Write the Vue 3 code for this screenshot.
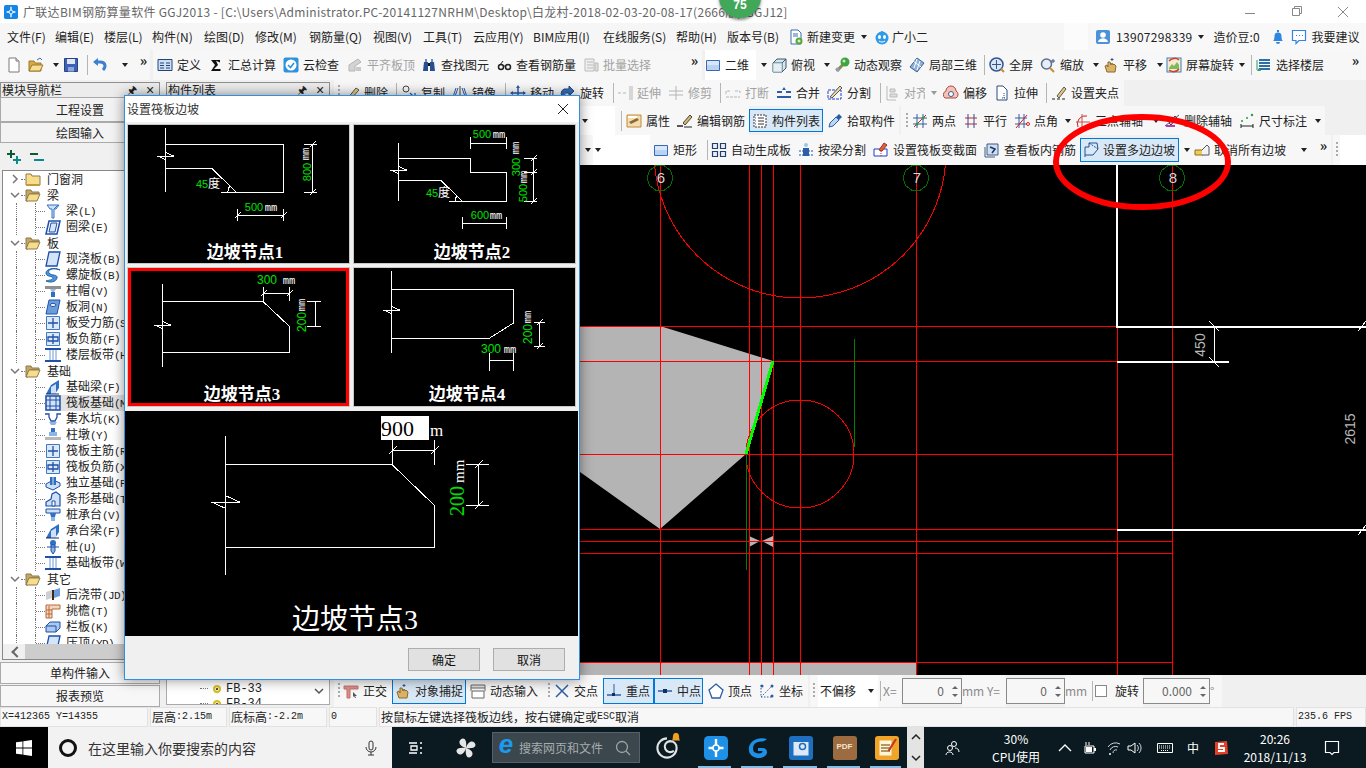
<script setup>
// x positions are read off the toolbar; widths come from the gap to the next item
const flow = (end, list) =>
  list.map((it, n) => ({ ...it, w: (n + 1 < list.length ? list[n + 1].x : end) - it.x }))

const sep = (x) => ({ x, k: 'sep' })
const arrow = (x) => ({ x, k: 'arrow' })
const more = (x) => ({ x, k: 'more' })
const grip = (x) => ({ x, k: 'grip' })
const brk = (x) => ({ x, k: 'brk' })
const blank = (x) => ({ x })
const btn = (x, i, t, extra = {}) => ({ x, i, t, ...extra })
const dis = { dis: true }
const on = { on: true }

const rows = [
  {
    name: 'r1',
    items: flow(1366, [
      blank(0), btn(6, 'doc'), btn(28, 'folder'), arrow(48), btn(63, 'save'), sep(83), btn(92, 'undo'), arrow(112),
      more(137), brk(150), blank(153), btn(157, 'def', '定义'), btn(208, 'sigma', '汇总计算'), btn(283, 'cloud', '云检查'),
      btn(347, 'level', '平齐板顶', dis), btn(421, 'binoc', '查找图元'), btn(496, 'glass', '查看钢筋量'),
      btn(583, 'batch', '批量选择', dis), more(687), brk(702), { x: 705, i: 'rect', t: '二维', k: 'white' },
      arrow(756), btn(771, 'box', '俯视'), arrow(820), btn(834, 'orbit', '动态观察'), btn(909, 'local', '局部三维'),
      sep(980), btn(989, 'full', '全屏'), btn(1040, 'zoom', '缩放'), arrow(1089), btn(1103, 'hand', '平移'), arrow(1153),
      btn(1166, 'screen', '屏幕旋转'), arrow(1236), sep(1247), btn(1256, 'floors', '选择楼层'), more(1349), blank(1362),
    ]),
  },
  {
    name: 'r2',
    items: flow(1366, [
      brk(330), grip(334), btn(344, 'del', '删除'), sep(392), btn(401, 'copy', '复制'), btn(452, 'mirror', '镜像'), sep(500),
      btn(510, 'move', '移动'), btn(560, 'turn', '旋转'), sep(609), btn(617, 'extend', '延伸', dis), btn(668, 'trim', '修剪', dis),
      sep(716), btn(725, 'cut', '打断', dis), btn(776, 'merge', '合并'), btn(827, 'split', '分割'), sep(876),
      btn(885, 'align', '对齐', { ...dis, wide: true }), { x: 925, k: 'arrow', dis: true }, btn(943, 'offset', '偏移'),
      btn(994, 'stretch', '拉伸'), sep(1042), btn(1051, 'gripset', '设置夹点'), brk(1124),
    ]),
  },
  {
    name: 'r3',
    items: flow(1366, [
      brk(330), { x: 580, k: 'combo' }, blank(615), sep(617), btn(626, 'prop', '属性'), btn(677, 'edit', '编辑钢筋'),
      btn(749, 'list', '构件列表', on), blank(823), btn(827, 'pick', '拾取构件'), brk(899), grip(901), btn(912, 'two', '两点'),
      btn(963, 'para', '平行'), btn(1014, 'angle', '点角'), arrow(1060), btn(1075, 'three', '三点辅轴'), arrow(1148),
      btn(1164, 'delaxis', '删除辅轴'), btn(1239, 'dim', '尺寸标注'), arrow(1311), brk(1325),
    ]),
  },
  {
    name: 'r4',
    items: flow(1366, [
      brk(330), blank(580), arrow(582), { x: 593, k: 'combo' }, blank(650), btn(653, 'rect', '矩形'), sep(703),
      btn(711, 'auto', '自动生成板'), btn(798, 'beam', '按梁分割'), btn(873, 'section', '设置筏板变截面'),
      btn(984, 'viewbar', '查看板内钢筋'), btn(1080, 'poly', '设置多边边坡', on), arrow(1179), btn(1194, 'cancel', '取消所有边坡'),
      arrow(1291), more(1316), brk(1331), grip(1333), { x: 1340, k: 'white' },
    ]),
  },
  {
    name: 'r5',
    items: flow(1366, [
      brk(330), grip(334), btn(343, 'ortho', '正交'), btn(392, 'hand', '对象捕捉', on), blank(466), btn(470, 'dyn', '动态输入'),
      grip(544), btn(554, 'cross', '交点'), btn(603, 'perp', '重点', on), btn(654, 'mid', '中点', on), blank(703),
      btn(708, 'vertex', '顶点'), btn(759, 'coord', '坐标'), brk(808), grip(810), { x: 818, k: 'combo', t: '不偏移' }, sep(878),
      { x: 883, k: 'lab', t: 'X=' }, { x: 902, k: 'input', t: '0' }, { x: 962, k: 'lab', t: 'mm' },
      { x: 987, k: 'lab', t: 'Y=' }, { x: 1006, k: 'input', t: '0' }, { x: 1065, k: 'lab', t: 'mm' }, sep(1089),
      { x: 1095, k: 'check' }, { x: 1115, k: 'plain', t: '旋转' }, { x: 1143, k: 'input', t: '0.000' }, { x: 1210, k: 'lab', t: '°' },
      brk(1222),
    ]),
  },
]

const menu = flow(788, [
  { x: 7, t: '文件(F)' }, { x: 55, t: '编辑(E)' }, { x: 104, t: '楼层(L)' }, { x: 152, t: '构件(N)' }, { x: 204, t: '绘图(D)' },
  { x: 255, t: '修改(M)' }, { x: 309, t: '钢筋量(Q)' }, { x: 373, t: '视图(V)' }, { x: 423, t: '工具(T)' }, { x: 473, t: '云应用(Y)' },
  { x: 533, t: 'BIM应用(I)' }, { x: 603, t: '在线服务(S)' }, { x: 676, t: '帮助(H)' }, { x: 727, t: '版本号(B)' },
])

const tree = [
  { t: '门窗洞', closed: true },
  { t: '梁' },
  { i: 'tbeam', t: '梁', c: '(L)' },
  { i: 'tring', t: '圈梁', c: '(E)' },
  { t: '板' },
  { i: 'tslab', t: '现浇板', c: '(B)' },
  { i: 'tspiral', t: '螺旋板', c: '(B)' },
  { i: 'tcap', t: '柱帽', c: '(V)' },
  { i: 'thole', t: '板洞', c: '(N)' },
  { i: 'tforce', t: '板受力筋', c: '(S)' },
  { i: 'tneg', t: '板负筋', c: '(F)' },
  { i: 'tband', t: '楼层板带', c: '(H)' },
  { t: '基础' },
  { i: 'tfbeam', t: '基础梁', c: '(F)' },
  { i: 'traft', t: '筏板基础', c: '(M)', sel: true },
  { i: 'tpit', t: '集水坑', c: '(K)' },
  { i: 'tpier', t: '柱墩', c: '(Y)' },
  { i: 'tforce', t: '筏板主筋', c: '(R)' },
  { i: 'tneg', t: '筏板负筋', c: '(X)' },
  { i: 'tiso', t: '独立基础', c: '(P)' },
  { i: 'tstrip', t: '条形基础', c: '(T)' },
  { i: 'tpcap', t: '桩承台', c: '(V)' },
  { i: 'tfbeam', t: '承台梁', c: '(F)' },
  { i: 'tpile', t: '桩', c: '(U)' },
  { i: 'tband', t: '基础板带', c: '(W)' },
  { t: '其它' },
  { i: 'tpour', t: '后浇带', c: '(JD)' },
  { i: 'teave', t: '挑檐', c: '(T)' },
  { i: 'trail', t: '栏板', c: '(K)' },
  { i: 'tslab', t: '压顶', c: '(YD)' },
]

const zig = (x, y, s) => `M${x - s} ${y}H${x + s}L${x} ${y - s * 0.45}M${x - s} ${y}L${x} ${y + s * 0.45}`
const tick = (x, y, s = 3) => `M${x - s} ${y + s}L${x + s} ${y - s}`

const tiles = [
  {
    left: true,
    d: 'M37.5 3V67M37.5 19.5H155.5V67.5H93M37.5 43.5H84L108 67M100 67A8 8 0 0 1 102 61M184.5 19V67M176 19.5H189M176 67.5H189M109.5 90.5H155M109.5 84V96M155.5 84V96' +
      zig(37.5, 31, 8) + tick(184.5, 19.5) + tick(184.5, 67.5) + tick(109.5, 90.5) + tick(155.5, 90.5),
    nums: [{ x: 126, y: 86, t: '500' }, { x: 74, y: 63, t: '45' }, { x: 183, y: 47, t: '800', rot: true }],
    units: [{ x: 143, y: 86, t: 'mm' }, { x: 181, y: 29, t: 'mm', rot: true }],
    cn: [{ x: 86, y: 63, t: '度' }],
    title: '边坡节点1', tx: 117, ty: 133,
  },
  {
    d: 'M44.5 18V76M44.5 33.5H116.5V47.5H152.5V76.5H95M44.5 55.5H87L108 76M101 76A7 7 0 0 1 103 71M116.5 18.5H152M116.5 12V24M152.5 12V24M179.5 33V76M170 33.5H183M170 47.5H183M170 76.5H183M108.5 98.5H152M108.5 92V104M152.5 92V104' +
      zig(44.5, 45, 8) + tick(179.5, 33.5) + tick(179.5, 47.5) + tick(179.5, 76.5),
    nums: [{ x: 128, y: 13, t: '500' }, { x: 126, y: 94, t: '600' }, { x: 78, y: 72, t: '45' }, { x: 166, y: 42, t: '300', rot: true }, { x: 173, y: 68, t: '500', rot: true }],
    units: [{ x: 145, y: 13, t: 'mm' }, { x: 142, y: 94, t: 'mm' }, { x: 165, y: 23, t: 'mm', rot: true }, { x: 173, y: 52, t: 'mm', rot: true }],
    cn: [{ x: 90, y: 72, t: '度' }],
    title: '边坡节点2', tx: 118, ty: 133,
  },
  {
    sel: true,
    d: 'M34.5 16V99M34.5 33.5H135L161 58V84.5H34.5M135.5 19V33M161.5 19V33M135.5 25.5H161M187.5 33V58M179 33.5H193M179 58.5H193' +
      zig(34.5, 57, 8) + tick(135.5, 25.5) + tick(161.5, 25.5),
    nums: [{ x: 139, y: 16, t: '300', big: true }, { x: 178, y: 54, t: '200', rot: true, big: true }],
    units: [{ x: 161, y: 16, t: 'mm' }, { x: 177, y: 37, t: 'mm', rot: true }],
    cn: [],
    title: '边坡节点3', tx: 114, ty: 132,
  },
  {
    d: 'M37.5 3V85M37.5 21.5H159.5V55L135 70.5H37.5M185.5 54V78M180 54.5H191M180 78.5H191M135.5 85V103M159.5 85V103M135.5 92.5H159' +
      zig(37.5, 42, 8) + tick(185.5, 54.5) + tick(185.5, 78.5),
    nums: [{ x: 137, y: 85, t: '300', big: true }, { x: 178, y: 66, t: '200', rot: true, big: true }],
    units: [{ x: 156, y: 85, t: 'mm' }, { x: 177, y: 49, t: 'mm', rot: true }],
    cn: [],
    title: '边坡节点4', tx: 113, ty: 132,
  },
]
const bigShape = 'M100.5 25V164M100.5 53.5H267L309 94V136.5H100.5M267.5 29V54M309.5 29V54M267.5 39.5H309M353.5 53V94M341 53.5H364M341 94.5H364' +
  zig(100.5, 91, 14) + tick(267.5, 39.5, 4) + tick(309.5, 39.5, 4) + tick(353.5, 53.5, 4) + tick(353.5, 94.5, 4)

const vLines = [660, 749, 761, 773, 800, 916, 1172]
const hLines = [[326, 1117], [361, 1117], [454, 1172], [529, 1117], [541, 1172], [553, 1172], [662, 1172]]
const axes = [{ x: 660, t: '6' }, { x: 916, t: '7' }, { x: 1172, t: '8' }]
const octagon = (x) =>
  Array.from({ length: 10 }, (_, n) => {
    const a = (n * Math.PI) / 5
    return `${(x + 13 * Math.cos(a)).toFixed(1)},${(178 + 13 * Math.sin(a)).toFixed(1)}`
  }).join(' ')

const taskApps = [
  { w: 43, i: 'appPlus' }, { w: 42, i: 'appG' }, { w: 44, i: 'appBook' }, { w: 43, i: 'appPdf' }, { w: 41, i: 'appNote' },
]
const tray = [
  { w: 58, i: 'people' }, { w: 68, cpu: true }, { w: 4 }, { w: 22, i: 'up' }, { w: 28, i: 'batt' }, { w: 20, i: 'wifi' },
  { w: 22, i: 'speak' }, { w: 38, i: 'keys' }, { w: 18, zh: true }, { w: 38, i: 'sogou' }, { w: 70, clock: true }, { w: 44, i: 'note' },
]

const icons = {
  doc: '<path d="M3 1h7l3 3v11H3z" fill="#fff" stroke="#7a7a7a"/><path d="M10 1v3h3" fill="#ddd" stroke="#7a7a7a"/>',
  folder: '<path d="M1 4h5l1 2h6v8H1z" fill="#d9a93e" stroke="#9b7a2c"/><path d="M4 8h11l-3 6H1z" fill="#f6df95" stroke="#9b7a2c"/><path d="M9 3l3-2 2 2" fill="none" stroke="#3a6bb0"/>',
  save: '<path d="M1.500 1.500h13v13h-13z" fill="#3f61b4" stroke="#2a4288"/><path d="M4 2h8v5H4z" fill="#dfe6f5"/><path d="M5 10h6v4.500H5z" fill="#8fa6d8"/>',
  undo: '<path d="M11 13c3-3 3-8-3-8H3" fill="none" stroke="#3f7fcf" stroke-width="3"/><path d="M6 1L1 5l5 4z" fill="#3f7fcf"/>',
  def: '<path d="M1 2.500h14v11H1z" fill="#cfdff3" stroke="#22447c"/><path d="M3 6h4M3 8.500h4M3 11h4M9 6h4M9 8.500h4M9 11h4" stroke="#22447c"/>',
  sigma: '<path d="M3 3h9v2.500L8 3.800 10 8 6 12h6.500V14H3l4-6z" fill="#111"/>',
  cloud: '<rect x=".5" y=".5" width="15" height="15" rx="2" fill="#2e93dc"/><circle cx="8" cy="8" r="5.500" fill="#fff"/><path d="M5 8l2.500 2.500L11 6" fill="none" stroke="#2e93dc" stroke-width="1.600"/>',
  level: '<path d="M2 14V8l9-6 3 3-6 4v5z" fill="#d3d3d3" stroke="#b5b5b5"/><path d="M9 14h5v-4H9z" fill="#c9c9c9"/>',
  binoc: '<path d="M2 14l1-9h4v9zM9 14V5h4l1 9z" fill="#27508f"/><path d="M4 2h2v3H4zM10 2h2v3h-2z" fill="#6b8ec2"/><path d="M7 6h2v3H7z" fill="#111"/>',
  glass: '<circle cx="5" cy="10" r="2.500" fill="none" stroke="#222" stroke-width="1.500"/><circle cx="12" cy="10" r="2.500" fill="none" stroke="#222" stroke-width="1.500"/><path d="M7 9h3M4 8l3-4" stroke="#222"/>',
  batch: '<path d="M2 2h9v12H2z" fill="#eee" stroke="#bbb"/><path d="M4 5h6M4 8h6M4 11h6M12 6h3v8h-3z" stroke="#bbb" fill="#ddd"/>',
  rect: '<path d="M1.500 3.500h13v10h-13z" fill="#b9d2f2" stroke="#3568b8"/><path d="M2 4h12v4H2z" fill="#d8e6f8"/>',
  box: '<path d="M2 6l4-4h9v9l-4 4H2z" fill="#d5e6ee" stroke="#38586f"/><path d="M2 6h9v9M11 6l4-4" fill="none" stroke="#38586f"/><path d="M2 6h9v9H2z" fill="#eef5f8" fill-opacity=".6"/>',
  orbit: '<path d="M3 14L13 3" stroke="#8b8b4a" stroke-width="3"/><circle cx="11" cy="5" r="4.500" fill="#3fa544"/><circle cx="3.500" cy="12.500" r="2" fill="#8f9db0"/><circle cx="10" cy="4" r="1.500" fill="#c9e8b0"/>',
  local: '<path d="M8 1l7 5-7 9-7-5z" fill="#8fb0d8" stroke="#3c6396"/><path d="M4 4l8 6M8 2l-3 9M11 4l-3 9" stroke="#fff"/>',
  full: '<circle cx="7.500" cy="7.500" r="6.500" fill="#dbe6f3" stroke="#35568f" stroke-width="1.500"/><path d="M7.500 3v9M3 7.500h9" stroke="#35568f"/><path d="M12 12l3 3" stroke="#c88d2c" stroke-width="2"/>',
  zoom: '<circle cx="6.500" cy="7" r="5" fill="#e7eef7" stroke="#5a6f8c" stroke-width="1.500"/><path d="M10 11l4 4" stroke="#c88d2c" stroke-width="2"/><path d="M13 2v4M11 4h4" stroke="#35568f"/>',
  hand: '<path d="M4 15L2 9l2-1 1 2V5l2 0 1 3 1-2 1 2 1-1 2 2-1 6z" fill="#d9b36a" stroke="#8a6a2c"/><path d="M9 1v3M7.500 2.500h3" stroke="#35568f"/>',
  screen: '<rect x="1" y="1" width="14" height="14" fill="#f3ead0" stroke="#3d7fb8"/><path d="M3 11l3-4 2 2 3-4 2 3v4H3z" fill="#7dba5f"/><path d="M13 3a7 7 0 0 0-10 1M3 13a7 7 0 0 0 10-1" fill="none" stroke="#d23c2c" stroke-width="1.500"/>',
  floors: '<path d="M3 3h11M3 6h11M3 9h11M3 12h11" stroke="#2e6fa8" stroke-width="2"/><path d="M1 3v10" stroke="#2a9a62"/><path d="M1 14l2-3 2 3z" fill="#2a9a62"/>',
  del: '<path d="M3 14L12 3l3 2-8 9z" fill="#e7c77a" stroke="#555"/><path d="M1 15h12" stroke="#555"/>',
  copy: '<circle cx="5" cy="4" r="3" fill="none" stroke="#444"/><path d="M9 13h5V8M14 13L9 8" fill="none" stroke="#2c5ea8" stroke-width="1.300"/>',
  mirror: '<path d="M8 1v14" stroke="#444"/><path d="M6 3L2 14M4 3L1 12M10 3l4 11M12 3l3 9" stroke="#2c5ea8"/>',
  move: '<path d="M8 1v14M1 8h14" stroke="#2c5ea8" stroke-width="1.500"/><path d="M8 0l2 3H6zM8 16l2-3H6zM0 8l3-2v4zM16 8l-3-2v4z" fill="#2c5ea8"/>',
  turn: '<path d="M4 13a5 5 0 0 1 0-9h5v-3l5 5-5 5V8H6" fill="#3a6db8" stroke="#24487c"/>',
  extend: '<path d="M13 1v14M1 8h3M6 8h3M15 1v14" stroke="#b5b5b5"/>',
  trim: '<path d="M8 1v14M1 6h14M1 10h14" stroke="#b5b5b5"/>',
  cut: '<path d="M1 12h14M1 9V6h5M10 6h5v3" fill="none" stroke="#b5b5b5" stroke-dasharray="3 1"/>',
  merge: '<path d="M1 12h14" stroke="#2c5ea8" stroke-width="2"/><path d="M1 7h5M10 7h5" stroke="#2c5ea8" stroke-width="2"/><path d="M8 2l2 3H6z" fill="#2c5ea8"/>',
  split: '<path d="M1 5h13v9H1z" fill="none" stroke="#1d3ed0" stroke-dasharray="3 1"/><path d="M3 12L13 1l2 2L5 13z" fill="#e8d9a8" stroke="#555"/>',
  align: '<path d="M2 1v14h9" stroke="#bbb" fill="none"/><path d="M5 4h5v3H5zM5 9h7v3H5z" fill="#ddd" stroke="#bbb"/>',
  offset: '<path d="M2 13a4 4 0 0 1 1-7 5 5 0 0 1 10 0 4 4 0 0 1 0 7z" fill="#f3c2b8" stroke="#b04a3c"/><circle cx="8" cy="9" r="2.500" fill="#fff" stroke="#3b5b8c"/>',
  stretch: '<path d="M3 1h6l4 4v10H3z" fill="#fff" stroke="#2c4d80"/><path d="M10 8v5M8 13h4" stroke="#2c4d80" stroke-dasharray="1 1"/>',
  gripset: '<path d="M6 11L13 2l2 2-7 9z" fill="#e8c77a" stroke="#555"/><path d="M1 14h3M6 14h3M11 14h3" stroke="#222"/>',
  prop: '<path d="M1 2h14v12H1z" fill="#f4dcae" stroke="#c48a3a"/><path d="M3 9l8-4 2 2-8 4z" fill="#8c6a30"/><path d="M2 3h9v2H2z" fill="#fff"/>',
  edit: '<path d="M0 13h6" stroke="#222" stroke-width="1.500"/><path d="M6 10l7-8 2 2-7 8z" fill="#d9b66a" stroke="#444"/><path d="M7 14h8" stroke="#222"/>',
  list: '<path d="M2 2h12v12H2z" fill="#fff" stroke="#333" stroke-dasharray="2 1"/><path d="M6 5h6M6 8h6M6 11h6" stroke="#333"/><path d="M3 5h1M3 8h1M3 11h1" stroke="#2c5ea8"/>',
  pick: '<path d="M2 14l1-4 6-6 3 3-6 6z" fill="#bcd7f3" stroke="#2c5ea8"/><path d="M9 4l3-3 3 3-3 3z" fill="#2c5ea8"/>',
  two: '<path d="M1 5h14M1 11h14M5 1v14M11 1v14" stroke="#3a5a9a"/><path d="M2 14L14 2" stroke="#d02020"/><circle cx="11" cy="5" r="1.500" fill="#2a9a40"/><circle cx="5" cy="11" r="1.500" fill="#2a9a40"/>',
  para: '<path d="M2 5h12M2 11h12" stroke="#d02020"/><path d="M5 1v14M11 1v14" stroke="#2c4d9a"/>',
  angle: '<path d="M1 5h12M1 11h12M5 1v14M10 1v14" stroke="#3a5a9a"/><path d="M2 15L13 2" stroke="#d02020"/><circle cx="14" cy="11" r="1.500" fill="none" stroke="#d02020"/>',
  three: '<path d="M3 14a8 8 0 0 1 9-11" fill="none" stroke="#d02020"/><path d="M1 9h14M7 1v14" stroke="#c05050"/>',
  delaxis: '<path d="M1 13L15 2" stroke="#3a5a9a"/><path d="M2 13h9" stroke="#b040b0" stroke-width="2"/><path d="M5 10l6-7 2 2-6 7z" fill="#e0c0e8" stroke="#444"/>',
  dim: '<path d="M2 11v4M14 11v4M2 13h12" stroke="#222"/><circle cx="3" cy="8" r="1" fill="#2a9a40"/><circle cx="8" cy="5" r="1" fill="#2a9a40"/><circle cx="13" cy="2" r="1.200" fill="#2a9a40"/>',
  auto: '<path d="M1.500 1.500h5v5h-5zM9.500 1.500h5v5h-5zM1.500 9.500h5v5h-5zM9.500 9.500h5v5h-5z" fill="#e8edf6" stroke="#253e6e" stroke-width="1.200"/>',
  beam: '<path d="M1 9h14M1 13h14" stroke="#1d4fb8" stroke-dasharray="2 1"/><path d="M5 6h6v8H5z" fill="#2c5ea8"/><circle cx="8" cy="3" r="2" fill="#9ec4ee"/>',
  section: '<path d="M1 7h13v7H1z" fill="#fff" stroke="#1d3ed0"/><path d="M8 7v7" stroke="#d02020" stroke-dasharray="1 1"/><path d="M6 8l5-7 3 2-5 6z" fill="#e0603c" stroke="#a03020"/>',
  viewbar: '<path d="M3 2h11v11H3z" fill="#cfdff0" stroke="#3c5a88"/><path d="M1 5v10h10" fill="none" stroke="#3c5a88"/><path d="M6 5l5 2-3 4" fill="none" stroke="#1d3468" stroke-width="1.500"/>',
  poly: '<path d="M2 15V5h4V1h8l1 6-5 6H2" fill="#d9e9f8" stroke="#26508c"/><path d="M6 1l9 6" stroke="#26508c" stroke-dasharray="2 1"/>',
  cancel: '<path d="M1 8h8v5H1z" fill="#eecd52" stroke="#8a7020"/><path d="M8 8l5-5 2 2v8H8" fill="#f3f3f3" stroke="#556"/>',
  ortho: '<path d="M1 3h14v3H7v9H4V6H1z" fill="#d98e88" stroke="#c07068"/><path d="M10 9l4 4-2 0 1 2-1 0-1-2-1 1z" fill="#556"/>',
  dyn: '<path d="M1 2h14v3H1z" fill="#ddd" stroke="#666"/><path d="M2 8h12v7H2z" fill="#fff" stroke="#666"/><path d="M1 5v3M15 5v3" stroke="#666"/>',
  cross: '<path d="M2 2l12 12M14 2L2 14" stroke="#2c5ea8" stroke-width="1.500"/>',
  perp: '<path d="M1 12h14" stroke="#2c5ea8" stroke-width="1.500"/><path d="M8 1v11" stroke="#2c5ea8"/><rect x="6" y="10" width="3" height="3" fill="#103060"/>',
  mid: '<path d="M1 8h14" stroke="#2c5ea8" stroke-width="1.500"/><rect x="6" y="6" width="4" height="4" fill="#103060"/>',
  vertex: '<path d="M8 1l7 6-3 8H4L1 7z" fill="#fff" stroke="#2c5ea8" stroke-width="1.300"/>',
  coord: '<path d="M2 14L14 2M2 2v12h12" fill="none" stroke="#2c5ea8" stroke-dasharray="1.500 1.500"/><circle cx="3" cy="3" r="1.500" fill="#2c5ea8"/><circle cx="13" cy="3" r="1.500" fill="#2c5ea8"/><circle cx="13" cy="13" r="1.500" fill="#2c5ea8"/>',
  change: '<path d="M3 1h7l3 3v11H3z" fill="#fff" stroke="#3a6fb5"/><path d="M5 5h5M5 7h5" stroke="#3a6fb5"/><circle cx="11" cy="12" r="3.500" fill="#58a83c"/><path d="M9.500 12h3M11 10.500v3" stroke="#fff"/>',
  assist: '<circle cx="8" cy="9" r="6.500" fill="#2f9be8"/><circle cx="8" cy="3.500" r="1.500" fill="#2f9be8"/><ellipse cx="5.500" cy="8" rx="1.500" ry="2" fill="#fff"/><ellipse cx="10.500" cy="8" rx="1.500" ry="2" fill="#fff"/><path d="M5 12a4 3 0 0 0 6 0" fill="none" stroke="#fff"/>',
  user: '<rect x="1" y="1" width="14" height="14" rx="2" fill="#4d91d8"/><circle cx="8" cy="6" r="2.800" fill="#fff"/><path d="M3 13c1-5 9-5 10 0z" fill="#fff"/>',
  bell: '<path d="M3 12c2-1 1-5 2-7 1-2 5-2 6 0 1 2 0 6 2 7z" fill="#2f86e0"/><path d="M6 13h4a2 2 0 0 1-4 0z" fill="#2f86e0"/><rect x="7" y="1" width="2" height="2" fill="#2f86e0"/>',
  suggest: '<path d="M1.500 1.500h13v10H8l-3 3v-3H1.500z" fill="#fff" stroke="#2f86e0" stroke-width="1.200"/><path d="M5 6.500h1M8 6.500h1M11 6.500h1" stroke="#2f86e0"/>',
  plus: '<path d="M5 1v8M1 5h8" stroke="#0b5a36" stroke-width="2"/><path d="M11 7v8M7 11h8" stroke="#0c8a8a" stroke-width="2"/>',
  minus: '<path d="M1 5h8" stroke="#0b5a36" stroke-width="2"/><path d="M5 11h10" stroke="#0c8a8a" stroke-width="2"/>',
  closedFolder: '<path d="M1 3h5l1 2h8v9H1z" fill="#f7dd8a" stroke="#8b7a50"/><path d="M1 14h14" stroke="#c09a3e" stroke-width="2"/>',
  openFolder: '<path d="M1 3h5l1 2h7v2H5l-2 7H1z" fill="#c4a75e" stroke="#8b7a50"/><path d="M4 7h11l-3 7H1z" fill="#f7dd8a" stroke="#8b7a50"/>',
  tbeam: '<path d="M2 2h12l-3 4H9v9H7V6H5z" fill="#cfe1f6" stroke="#3573c4"/><path d="M9 6l4-4" stroke="#3573c4"/>',
  tring: '<path d="M4 2h11l-3 13H1z" fill="#fff" stroke="#1f4fa8" stroke-width="1.500"/><path d="M6 4h6l-2 9H4z" fill="#d7e6f9" stroke="#1f4fa8"/>',
  tslab: '<path d="M4 1h11l-3 14H1z" fill="#d3e5fa" stroke="#1f4fa8" stroke-width="1.300"/>',
  tspiral: '<path d="M15 3C8 0 2 3 4 6s9 1 8 5-7 5-11 3c3-1 7-1 7-3S1 10 1 6 9 0 15 3z" fill="#4a93de" stroke="#1f5fa8"/>',
  tcap: '<path d="M0 3h16v3H0z" fill="#8f8f8f"/><path d="M5 6h6l-2 3H7z" fill="#9eb9dc"/><path d="M6 9h4v5H6z" fill="#2f6fc4"/>',
  thole: '<path d="M4 1h11l-3 14H1z" fill="#6b9ddc" stroke="#1f4fa8"/><ellipse cx="8" cy="6" rx="3" ry="1.500" fill="#fff" stroke="#1f4fa8"/>',
  tforce: '<path d="M1.500 1.500h13v13h-13z" fill="#dce9f8" stroke="#4279c4"/><path d="M8 3v10M3 8h10" stroke="#1f4fa8" stroke-width="1.300"/>',
  tneg: '<path d="M1.500 1.500h13v13h-13z" fill="#dce9f8" stroke="#4279c4"/><path d="M3 6h10v4H3zM8 3v10" fill="none" stroke="#1f4fa8" stroke-width="1.300"/>',
  tband: '<path d="M0 2h16M0 14h16" stroke="#1f4fa8" stroke-width="2"/><path d="M5 3v10M8 3v10M11 3v10" stroke="#6a9ad8"/>',
  tfbeam: '<path d="M1 15l5-9 8-5v8l-4 6z" fill="#2f6fc4"/><path d="M6 15V8l5-3v10z" fill="#cfe1f6"/><path d="M1 15h13" stroke="#103060"/>',
  traft: '<path d="M1 1h14v14H1z" fill="#d3e3f7" stroke="#1f4fa8" stroke-width="1.500"/><path d="M1 5h14M1 11h14M5 1v14M11 1v14" stroke="#1f4fa8"/>',
  tpit: '<path d="M0 3h4v3l2 4h4l2-4V3h4" fill="none" stroke="#1f4fa8" stroke-width="1.300"/><path d="M4 11h8l-2 3H6z" fill="#8db5e3"/>',
  tpier: '<path d="M6 1h4v4H6z" fill="#2f6fc4"/><path d="M4 5h8v4H4z" fill="#8db5e3"/><path d="M0 10h16v3H0z" fill="#b8b8b8"/>',
  tiso: '<path d="M1 9l7-4 7 3v3l-7 4-7-3z" fill="#cfe1f6" stroke="#1f4fa8"/><path d="M5 2h6v8H5z" fill="#2f6fc4"/><path d="M8 2v8" stroke="#cfe1f6"/>',
  tstrip: '<path d="M1 15V11l5-3 1-5 4-2 4 3v11z" fill="#cfe1f6" stroke="#1f4fa8" stroke-width="1.200"/><path d="M7 15v-5h3v5z" fill="#fff" stroke="#1f4fa8"/>',
  tpcap: '<path d="M1 2h14v4H1z" fill="#cfe1f6" stroke="#1f4fa8"/><path d="M5 6h6l-1 4H6z" fill="#2f6fc4"/><path d="M6 10h4v4H6z" fill="#8db5e3"/>',
  tpile: '<circle cx="8" cy="4" r="3" fill="#2f6fc4"/><path d="M6 6h4v6l-2 3-2-3z" fill="#8db5e3" stroke="#1f4fa8"/><path d="M2 8h12" stroke="#1f4fa8"/>',
  tpour: '<path d="M1 5l6-2v8l-6 2z" fill="#cfcfcf"/><path d="M9 3l6-2v8l-6 2z" fill="#6b9ddc"/><path d="M7 3h2v10H7z" fill="#3a2a20"/>',
  teave: '<path d="M1 2h14v4l-8 0v9H1z" fill="#f7d5bd" stroke="#b5683c"/><path d="M1 7h6M1 11h6M4 3v12" stroke="#b5683c"/>',
  trail: '<path d="M1 7l4-4h10v6l-4 4H1z" fill="#a9c9ee" stroke="#1f4fa8"/><path d="M1 7h10v6" fill="none" stroke="#1f4fa8"/>',
  appPlus: '<rect x="0" y="0" width="16" height="16" rx="3" fill="#1e90e6"/><path d="M8 2v12M3 8h10" stroke="#fff" stroke-width="1.600"/><circle cx="8" cy="8" r="2" fill="#1e90e6" stroke="#fff"/>',
  appG: '<path d="M14 2C6 0 1 5 2 10s8 6 11 3c2-2 1-5-2-5H8v2h3c0 2-3 2-5 1S4 5 8 4c2-.5 4 0 6-2z" fill="#1e90e6"/>',
  appBook: '<rect width="16" height="16" rx="2" fill="#1e6fc0"/><path d="M3 4h5v9H3zM8 4h5v9H8z" fill="#dfe9f5"/><circle cx="9" cy="7" r="2" fill="none" stroke="#1e6fc0"/>',
  appPdf: '<rect width="16" height="16" rx="2" fill="#9c6b3f"/>',
  appNote: '<rect width="16" height="16" rx="2" fill="#f0a528"/><path d="M3 3h8v10H3z" fill="#fff6da"/><path d="M4 6h6M4 8h6M4 10h6" stroke="#9a7a3a"/><path d="M9 10l5-8" stroke="#c0392b" stroke-width="1.500"/>',
  people: '<circle cx="9" cy="4" r="2.500" fill="none" stroke="#fff"/><circle cx="5" cy="8" r="2.500" fill="none" stroke="#fff"/><path d="M1 15c0-4 7-4 7 0M10 8c2 0 4 1 4 4" fill="none" stroke="#fff"/>',
  up: '<path d="M2 11l6-6 6 6" fill="none" stroke="#fff" stroke-width="1.300"/>',
  batt: '<path d="M3 6h9v7H3z" fill="none" stroke="#fff"/><path d="M12 8h2v3h-2z" fill="#fff"/><path d="M4 7h6v5H4z" fill="#fff"/><path d="M4 2v3M7 2v3" stroke="#fff"/>',
  wifi: '<path d="M2 7a9 9 0 0 1 12-3M4 10a6 6 0 0 1 8-3M7 13a3 3 0 0 1 4-3" fill="none" stroke="#cfd6da"/><circle cx="4" cy="14" r="1" fill="#fff"/>',
  speak: '<path d="M1 6h3l4-3v10l-4-3H1z" fill="none" stroke="#fff"/><path d="M10 5a4 4 0 0 1 0 6M12 3a7 7 0 0 1 0 10" fill="none" stroke="#cfd6da"/>',
  keys: '<path d="M.5 3.500h15v9H.5z" fill="none" stroke="#fff"/><path d="M2 6h12M2 8h12M4 10.500h8" stroke="#fff" stroke-dasharray="1 1"/>',
  sogou: '<path d="M2 2l12-1 1 13-13 1z" fill="#e2402a"/><path d="M11 4H6v4h5v3H5" fill="none" stroke="#fff" stroke-width="1.800"/>',
  note: '<path d="M1.500 1.500h13v11H10l-2 2-2-2H1.500z" fill="none" stroke="#fff" stroke-width="1.200"/>',
  mic: '<rect x="6" y="1" width="4" height="9" rx="2" fill="none" stroke="#333"/><path d="M3 7a5 5 0 0 0 10 0M8 12v3M5 15h6" fill="none" stroke="#333"/>',
  taskview: '<path d="M1 3h8M1 13h8M3 6h6v4H3zM12 3h2M12 8h2M12 13h2" fill="none" stroke="#fff" stroke-width="1.300"/>',
  fan: '<path d="M8 8C4 7 2 4 4 2s5-1 4 6zM8 8c1-4 4-6 6-4s1 5-6 4zM8 8c4 1 6 4 4 6s-5 1-4-6zM8 8c-1 4-4 6-6 4s-1-5 6-4z" fill="#e6e6e6"/>',
  find: '<circle cx="7" cy="7" r="5.500" fill="none" stroke="#9aa4a8" stroke-width="1.300"/><path d="M11 11l4 4" stroke="#9aa4a8" stroke-width="1.300"/>',
  swirl: '<path d="M8 1a7 7 0 1 0 7 7c0-3-2-5-5-5a4 4 0 1 0 3 7" fill="none" stroke="#dfe3e5" stroke-width="1.500"/>',
  goldgear: '<circle cx="8" cy="8" r="4" fill="none" stroke="#d9c020" stroke-width="3"/><circle cx="8" cy="8" r="1.500" fill="#333"/>',
}
</script>

<template>
  <div class="shell">
    <header class="title">
      <svg class="ic logo" viewBox="0 0 16 16"><rect width="16" height="16" rx="2" fill="#1486e6" /><path d="M8 2v12M3 8h10" stroke="#fff" stroke-width="1.500" /><circle cx="8" cy="8" r="2.200" fill="#1486e6" stroke="#fff" /></svg>
      <span class="caption">广联达BIM钢筋算量软件 GGJ2013 - [C:\Users\Administrator.PC-20141127NRHM\Desktop\白龙村-2018-02-03-20-08-17(2666版).GGJ12]</span>
      <div class="winbtns">
        <svg viewBox="0 0 46 23"><path d="M17 13.500h10" stroke="#888" /></svg>
        <svg viewBox="0 0 46 23"><path d="M18.500 8.500h7v7h-7zM20.500 8.500v-2h7v7h-2" fill="none" stroke="#888" /></svg>
        <svg viewBox="0 0 46 23"><path d="M18 7l10 10M28 7L18 17" stroke="#888" /></svg>
      </div>
    </header>

    <nav class="menu">
      <span v-for="m in menu" :key="m.x" class="mi" :style="{ width: m.w + 'px' }">{{ m.t }}</span>
      <svg class="ic mi-ic" viewBox="0 0 16 16" v-html="icons.change"></svg>
      <span class="mi-t">新建变更</span><i class="tri menu-tri"></i>
      <svg class="ic mi-ic2" viewBox="0 0 16 16" v-html="icons.assist"></svg>
      <span class="mi-t">广小二</span>
      <span class="stub"></span>
      <div class="account">
        <svg class="ic" viewBox="0 0 16 16" v-html="icons.user"></svg>
        <span class="phone">13907298339</span><i class="tri"></i>
        <span class="pea">造价豆:0</span>
        <svg class="ic" viewBox="0 0 16 16" v-html="icons.bell"></svg>
        <svg class="ic" viewBox="0 0 16 16" v-html="icons.suggest"></svg>
        <span>我要建议</span>
      </div>
    </nav>

    <div v-for="row in rows" :key="row.name" :class="['row', row.name]">
      <div
        v-for="it in row.items"
        :key="it.x"
        :class="['ti', it.k, { on: it.on, dis: it.dis, wide: it.wide }]"
        :style="{ width: it.w + 'px' }"
      >
        <svg v-if="it.i" class="ic" viewBox="0 0 16 16" v-html="icons[it.i]"></svg>
        <span v-if="it.t" class="tx">{{ it.t }}</span>
        <span v-if="it.k === 'input'" class="spin"><i></i><i></i></span>
        <i v-if="it.k === 'combo'" class="tri combo-tri"></i>
      </div>
    </div>

    <aside class="nav">
      <div class="dock-head">
        <span>模块导航栏</span>
        <span class="pin">🖈</span><span class="x">×</span>
      </div>
      <div class="navbtn tall">工程设置</div>
      <div class="navbtn">绘图输入</div>
      <div class="tree-tools">
        <svg class="ic" viewBox="0 0 16 16" v-html="icons.plus"></svg>
        <svg class="ic" viewBox="0 0 16 16" v-html="icons.minus"></svg>
      </div>
      <div class="tree-box">
        <div class="tree">
          <template v-for="n in tree" :key="n.t + n.c">
            <div v-if="!n.i" class="node head">
              <svg class="chev" viewBox="0 0 10 10">
                <path :d="n.closed ? 'M3 1l4 4-4 4' : 'M1 3l4 4 4-4'" fill="none" stroke="#777" stroke-width="1.500" />
              </svg>
              <span class="dots"></span>
              <svg class="ic folder" viewBox="0 0 16 16" v-html="n.closed ? icons.closedFolder : icons.openFolder"></svg>
              <span class="cap">{{ n.t }}</span>
            </div>
            <div v-else :class="['node', 'leaf', { sel: n.sel }]">
              <span class="rail"></span>
              <span class="conn"></span>
              <svg class="ic" viewBox="0 0 16 16" v-html="icons[n.i]"></svg>
              <span class="cap"><span>{{ n.t }}</span><span class="code tall-code">{{ n.c }}</span></span>
            </div>
          </template>
        </div>
        <div class="hbar"><i class="lt"></i><span class="thumb"></span></div>
      </div>
      <div class="navbtn low">单构件输入</div>
      <div class="navbtn low">报表预览</div>
    </aside>

    <aside class="comp">
      <div class="dock-head">
        <span>构件列表</span>
        <span class="pin">🖈</span><span class="x">×</span>
      </div>
      <div class="comp-body">
        <div class="fb"><span class="fb-dots"></span><svg class="ic" viewBox="0 0 16 16" v-html="icons.goldgear"></svg><span>FB-33</span></div>
        <div class="fb"><span class="fb-dots"></span><svg class="ic" viewBox="0 0 16 16" v-html="icons.goldgear"></svg><span>FB-34</span></div>
        <svg class="vdown" viewBox="0 0 10 10"><path d="M1 3l4 4 4-4" fill="none" stroke="#555" stroke-width="1.500" /></svg>
      </div>
    </aside>

    <main class="canvas">
      <svg viewBox="330 165 1036 510" width="1036" height="510">
        <rect x="330" y="165" width="1036" height="510" fill="#000" />
        <path d="M330 326H660L773 361L746 454L660 529L580 472H330Z" fill="#b4b4b4" />
        <path d="M580 662H916V675H580Z" fill="#b4b4b4" />
        <path d="M749 536V547L760 541ZM773 536V547L762 541Z" fill="#b4b4b4" />
        <g class="thin">
          <circle cx="800" cy="152" r="146" fill="none" stroke="#f00" />
          <circle cx="800" cy="454" r="54" fill="none" stroke="#f00" />
          <path v-for="x in vLines" :key="x" :d="`M${x}.5 165V675`" stroke="#f00" />
          <path d="M1117.500 326V675" stroke="#f00" />
          <path v-for="h in hLines" :key="h[0]" :d="`M330 ${h[0]}.5H${h[1]}`" stroke="#f00" />
          <path d="M854.500 339V447M746.500 454V570" stroke="#008000" />
          <path d="M773 361L746 454" stroke="#00ff00" stroke-width="3" />
          <path d="M1117 165V327H1366M1117 362H1229M1117 530H1366" fill="none" stroke="#fff" stroke-width="2" />
          <path d="M1214.500 326V362M1209 321L1219 331M1209 357L1219 367M1358 331L1366 321M1358 535L1366 525" fill="none" stroke="#fff" />
          <polygon v-for="a in axes" :key="a.t" :points="octagon(a.x)" fill="none" stroke="#006f00" />
        </g>
        <text v-for="a in axes" :key="'n' + a.t" :x="a.x + 1" y="183" class="axis">{{ a.t }}</text>
        <text x="1205" y="345" class="cad" transform="rotate(-90 1205 345)">450</text>
        <text x="1355" y="429" class="cad" transform="rotate(-90 1355 429)">2615</text>
      </svg>
    </main>

    <footer class="status">
      <span class="cell c1">X=412365 Y=14355</span>
      <span class="cell c2">层高<span class="code">:2.15m</span></span>
      <span class="cell c3">底标高<span class="code">:-2.2m</span></span>
      <span class="cell c4"><span class="code">0</span></span>
      <span class="cell c5">按鼠标左键选择筏板边线，按右键确定或<span class="code">ESC</span>取消</span>
      <span class="cell c6"><span class="code">235.6 FPS</span></span>
    </footer>

    <div class="taskbar">
      <div class="tb-win">
        <svg viewBox="0 0 16 16" width="16" height="16"><path d="M0 2.300l6.500-.9v6.200H0zM7.300 1.300L16 0v7.600H7.300zM0 8.400h6.500v6.200L0 13.700zM7.300 8.400H16V16l-8.700-1.200z" fill="#fff" /></svg>
      </div>
      <div class="tb-search">
        <span class="ring"></span>
        <span class="hint">在这里输入你要搜索的内容</span>
        <svg class="ic" viewBox="0 0 16 16" v-html="icons.mic"></svg>
      </div>
      <div class="tb-slot s48"><svg class="ic" viewBox="0 0 16 16" v-html="icons.taskview"></svg></div>
      <div class="tb-slot s50"><svg class="ic big" viewBox="0 0 16 16" v-html="icons.fan"></svg></div>
      <div class="tb-find">
        <span class="ie">e</span><span class="find-t">搜索网页和文件</span>
        <svg class="ic" viewBox="0 0 16 16" v-html="icons.find"></svg>
      </div>
      <div class="tb-slot s54">
        <svg class="ic big" viewBox="0 0 16 16" v-html="icons.swirl"></svg>
        <svg class="ic mini-bell" viewBox="0 0 16 16"><path d="M3 12c2-1 1-5 2-7 1-2 5-2 6 0 1 2 0 6 2 7z" fill="#f0a020" /></svg>
      </div>
      <div v-for="a in taskApps" :key="a.i" class="tb-app" :style="{ width: a.w + 'px' }">
        <span class="app-wrap">
          <svg class="ic app" viewBox="0 0 16 16" v-html="icons[a.i]"></svg>
          <b v-if="a.i === 'appPdf'" class="pdf">PDF</b>
        </span>
      </div>
      <div class="tb-chev">
        <svg viewBox="0 0 10 10" width="10" height="10"><path d="M1 7l4-4 4 4" fill="none" stroke="#222" stroke-width="1.500" /></svg>
        <svg viewBox="0 0 10 10" width="10" height="10"><path d="M1 3l4 4 4-4" fill="none" stroke="#222" stroke-width="1.500" /></svg>
      </div>
      <div v-for="(t, n) in tray" :key="n" class="tray" :style="{ width: t.w + 'px' }">
        <svg v-if="t.i" class="ic" viewBox="0 0 16 16" v-html="icons[t.i]"></svg>
        <span v-if="t.cpu" class="two">30%<br />CPU使用</span>
        <span v-if="t.zh">中</span>
        <span v-if="t.clock" class="two">20:26<br />2018/11/13</span>
      </div>
    </div>

    <!-- dialog floats over the workspace -->
    <section class="dialog">
      <div class="dlg-title">
        <span>设置筏板边坡</span>
        <svg viewBox="0 0 12 12" width="12" height="12"><path d="M1 1l10 10M11 1L1 11" stroke="#222" /></svg>
      </div>
      <div class="tiles">
        <div v-for="(c, n) in tiles" :key="n" :class="['tile', { sel: c.sel, left: c.left }]">
          <svg viewBox="0 0 221 138" width="221" height="138">
            <path :d="c.d" fill="none" stroke="#fff" shape-rendering="crispEdges" />
            <text
              v-for="v in c.nums"
              :key="v.x + v.t"
              :x="v.x"
              :y="v.y"
              :class="['num', { lg: v.big }]"
              :transform="v.rot ? `rotate(-90 ${v.x} ${v.y})` : null"
            >{{ v.t }}</text>
            <text
              v-for="v in c.units"
              :key="v.x + 'u' + v.y"
              :x="v.x"
              :y="v.y"
              class="unit"
              :transform="v.rot ? `rotate(-90 ${v.x} ${v.y})` : null"
            >{{ v.t }}</text>
            <text v-for="v in c.cn" :key="v.t" :x="v.x" :y="v.y" class="deg">{{ v.t }}</text>
            <text :x="c.tx" :y="c.ty" class="node-name">{{ c.title }}</text>
          </svg>
        </div>
      </div>
      <div class="preview">
        <svg viewBox="0 0 453 225" width="453" height="225">
          <path :d="bigShape" fill="none" stroke="#fff" shape-rendering="crispEdges" />
          <rect x="256" y="5" width="48" height="24" fill="#fff" />
          <text x="256" y="25" class="big-input">900</text>
          <text x="305" y="25" class="big-unit">m</text>
          <text x="339" y="105" class="big-num" transform="rotate(-90 339 105)">200</text>
          <text x="339" y="72" class="big-unit mm" transform="rotate(-90 339 72)">mm</text>
          <text x="230" y="218" class="big-name">边坡节点3</text>
        </svg>
      </div>
      <div class="dlg-foot">
        <button class="dlg-btn">确定</button>
        <button class="dlg-btn">取消</button>
      </div>
    </section>

    <!-- hand-drawn mark from whoever took the screenshot -->
    <svg class="mark" viewBox="0 0 200 120" width="200" height="120">
      <ellipse cx="102" cy="62" rx="86" ry="45" fill="none" stroke="#f00" stroke-width="6" />
    </svg>

    <div class="badge"><span>75</span></div>
  </div>
</template>

<style>
html, body { margin: 0; padding: 0; overflow: hidden; background: #f0f0f0; }
</style>

<style scoped>
.shell {
  position: relative;
  width: 1366px;
  height: 768px;
  overflow: hidden;
  display: grid;
  grid-template-columns: 160px 6px 164px 1036px;
  grid-template-rows: 23px 27px 30px 26px 29px 30px 510px 32px 20px 41px;
  background: #f0f0f0;
  color: #222;
  font-family: "Noto Sans CJK SC", "Liberation Sans", sans-serif;
  font-size: 12px;
  line-height: 1;
}
.ic { width: 16px; height: 16px; flex: none; display: block; }

.title {
  grid-column: 1 / -1;
  grid-row: 1;
  display: flex;
  align-items: center;
  background: #fff;
  color: #666;
  padding-left: 4px;
}
.logo { width: 14px; height: 14px; margin-right: 5px; }
.caption { white-space: nowrap; letter-spacing: 0.3px; }
.winbtns { margin-left: auto; display: flex; }
.winbtns svg { width: 46px; height: 23px; display: block; }

.menu {
  grid-column: 1 / -1;
  grid-row: 2;
  display: flex;
  align-items: center;
  background: #f6f6f6;
  padding-left: 7px;
  white-space: nowrap;
}
.mi { flex: none; }
.mi-ic { margin: 0 3px 0 0; }
.mi-ic2 { margin: 0 2px 0 7px; }
.mi-t { color: #222; }
.menu-tri { margin: 0 0 0 6px; }
.stub { width: 24px; height: 27px; background: #fbfbfb; margin-left: auto; flex: none; }
.account {
  display: flex;
  align-items: center;
  gap: 5px;
  height: 27px;
  box-sizing: border-box;
  width: 276px;
  padding: 0 6px 0 5px;
  background: #f8f8f8;
  margin-left: 2px;
  flex: none;
}
.phone { letter-spacing: 0.3px; }
.pea { margin-left: 5px; margin-right: 5px; }
.tri {
  display: inline-block;
  width: 0;
  height: 0;
  border: 3px solid transparent;
  border-top: 4px solid #222;
  border-bottom: 0;
  flex: none;
}

.row { display: flex; align-items: stretch; background: #f0f0f0; }
.r1 { grid-column: 1 / -1; grid-row: 3; }
.r2 { grid-column: 4; grid-row: 4; }
.r3 { grid-column: 4; grid-row: 5; }
.r4 { grid-column: 4; grid-row: 6; }
.r5 { grid-column: 4; grid-row: 8; }
.ti {
  flex: none;
  display: flex;
  align-items: center;
  gap: 4px;
  box-sizing: border-box;
  background: #f7f7f7;
  white-space: nowrap;
}
.ti.brk { background: transparent; }
.ti.dis { color: #a2a2a2; }
.ti.wide { gap: 3px; }
.ti.on {
  background: #d9e8f6;
  border: 1px solid #0078d7;
  margin: 3px 0;
  padding-left: 2px;
}
.ti.sep::before { content: ""; width: 1px; height: 20px; background: #b5b5b5; margin: 0 auto; }
.ti.arrow::before {
  content: "";
  margin: 0 auto;
  border: 3px solid transparent;
  border-top: 4px solid #222;
  border-bottom: 0;
}
.ti.arrow.dis::before { border-top-color: #999; }
.ti.more::before { content: "»"; font-size: 14px; font-weight: 700; margin: -10px auto 0 auto; }
.ti.grip::before {
  content: "";
  width: 2px;
  height: 16px;
  margin: 0 auto;
  background: repeating-linear-gradient(#aaa 0 2px, transparent 2px 4px);
}
.ti.white { background: #fff; }
.ti.combo { background: #fff; padding-left: 2px; justify-content: space-between; }
.combo-tri { margin-right: 4px; }
.ti.lab { color: #8a8a8a; }
.ti.plain { color: #222; }
.ti.input {
  background: #f7f7f7;
  border: 1px solid #8a8a8a;
  margin: 3px 0;
  justify-content: flex-end;
  gap: 8px;
  color: #666;
}
.spin { display: flex; flex-direction: column; gap: 5px; margin-right: 3px; }
.spin i { width: 0; height: 0; border: 3px solid transparent; }
.spin i:first-child { border-bottom: 3px solid #666; border-top: 0; }
.spin i:last-child { border-top: 3px solid #666; border-bottom: 0; }
.ti.check::before { content: ""; width: 10px; height: 10px; border: 1px solid #888; background: #fff; }

.dock-head {
  height: 15px;
  display: flex;
  align-items: center;
  border: 1px solid #8f8f8f;
  border-bottom: 0;
  background: #ececec;
  box-sizing: border-box;
  padding-left: 1px;
  margin-top: 2px;
  flex: none;
}
.pin { margin-left: auto; font-size: 11px; width: 18px; text-align: center; font-family: "DejaVu Sans", sans-serif; }
.x { width: 18px; text-align: center; font-size: 14px; font-family: "Liberation Sans", sans-serif; }

.nav { grid-column: 1; grid-row: 4 / 9; display: flex; flex-direction: column; }
.navbtn {
  height: 21px;
  flex: none;
  display: flex;
  align-items: center;
  justify-content: center;
  background: #f3f3f3;
  border: 1px solid #aaa;
  box-sizing: border-box;
}
.navbtn.tall { height: 25px; }
.navbtn.low { height: 22px; margin-top: 1px; background: #f7f7f7; }
.tree-tools { height: 27px; flex: none; display: flex; align-items: center; gap: 7px; padding-left: 6px; }
.tree-box {
  flex: 1;
  min-height: 0;
  margin: 0 0 1px 2px;
  border: 1px solid #888;
  background: #fff;
  display: flex;
  flex-direction: column;
}
.tree { flex: 1; min-height: 0; overflow: hidden; }
.node { height: 16px; display: flex; align-items: center; white-space: nowrap; }
.node .cap { margin-left: 5px; }
.chev { width: 10px; height: 10px; margin-left: 7px; flex: none; }
.dots { width: 4px; border-top: 1px dotted #777; flex: none; margin-left: 1px; }
.head .cap { margin-left: 6px; }
.rail { width: 13px; height: 16px; border-right: 1px dotted #777; flex: none; }
.conn { width: 9px; height: 16px; margin-left: 18px; flex: none; position: relative; border-left: 1px dotted #777; }
.conn::after { content: ""; position: absolute; left: 0; right: 0; top: 8px; border-top: 1px dotted #777; }
.node.sel { background: linear-gradient(90deg, #fff 0 42px, #e3e3e3 42px); }
.code { font-family: "Liberation Mono", monospace; font-size: 10px; }
.tall-code { font-size: 11px; letter-spacing: -0.6px; }
.hbar { height: 15px; flex: none; background: #f0f0f0; display: flex; align-items: center; }
.lt { width: 6px; height: 6px; margin-left: 10px; border-left: 2px solid #666; border-bottom: 2px solid #666; transform: rotate(45deg); flex: none; }
.thumb { width: 130px; height: 15px; margin-left: 4px; background: #cdcdcd; flex: none; }

.comp { grid-column: 3; grid-row: 4 / 9; display: flex; flex-direction: column; }
.comp-body {
  flex: 1;
  position: relative;
  background: #fff;
  border: 1px solid #aaa;
  margin-bottom: 2px;
  display: flex;
  flex-direction: column;
  justify-content: flex-end;
  overflow: hidden;
  font-family: "Liberation Mono", monospace;
}
.fb { height: 15px; display: flex; align-items: center; gap: 3px; padding-left: 33px; flex: none; }
.fb .ic { width: 12px; height: 12px; }
.fb:last-of-type { margin-bottom: -7px; }
.fb-dots { width: 8px; border-top: 1px dotted #777; }
.vdown { position: absolute; right: 5px; bottom: 8px; width: 10px; height: 10px; }

.canvas { grid-column: 4; grid-row: 7; background: #000; }
.canvas svg { display: block; }
.thin { shape-rendering: crispEdges; }
.axis { fill: #cfd8dc; font-size: 15px; text-anchor: middle; font-family: "Liberation Sans", sans-serif; }
.cad { fill: #b8b8b8; font-size: 14px; text-anchor: middle; font-family: "Liberation Sans", sans-serif; }

.status { grid-column: 1 / -1; grid-row: 9; display: flex; gap: 2px; }
.cell { background: #f7f7f7; border: 1px solid #e2e2e2; box-sizing: border-box; display: flex; align-items: center; padding-left: 1px; white-space: nowrap; }
.c1 { width: 148px; font-family: "Liberation Mono", monospace; font-size: 10px; }
.c2 { width: 77px; }
.c3 { width: 98px; }
.c4 { width: 48px; }
.c5 { width: 915px; }
.c6 { width: 70px; }

.taskbar { grid-column: 1 / -1; grid-row: 10; display: flex; background: #0a1a20; color: #fff; }
.tb-win { width: 48px; background: #000; display: flex; align-items: center; justify-content: center; }
.tb-search { width: 344px; background: #f2f2f2; display: flex; align-items: center; color: #333; font-size: 14px; }
.ring { width: 12px; height: 12px; border: 3px solid #111; border-radius: 50%; margin-left: 11px; flex: none; }
.hint { margin-left: 11px; }
.tb-search .ic { margin-left: auto; margin-right: 13px; }
.tb-slot { display: flex; align-items: center; justify-content: center; position: relative; }
.s48 { width: 48px; }
.s50 { width: 52px; }
.s54 { width: 54px; }
.big { width: 22px; height: 22px; }
.mini-bell { position: absolute; left: 29px; top: 3px; width: 14px; height: 14px; }
.tb-find {
  width: 148px;
  height: 31px;
  align-self: center;
  background: #3b474c;
  border: 1px solid #55606a;
  box-sizing: border-box;
  display: flex;
  align-items: center;
  font-size: 12px;
  color: #a6adb0;
}
.ie { width: 26px; text-align: center; color: #1a9af0; font: italic 700 26px "Liberation Sans", sans-serif; flex: none; margin-top: -6px; }
.find-t { flex: 1; }
.tb-find .ic { margin-right: 8px; }
.tb-app { display: flex; align-items: center; justify-content: center; position: relative; }
.tb-app::after { content: ""; position: absolute; left: 4px; right: 6px; bottom: 0; height: 2px; background: #7fbfe8; }
.app-wrap { position: relative; display: block; }
.app { width: 24px; height: 24px; }
.pdf { position: absolute; inset: 7px 0 0 0; font-size: 8px; text-align: center; color: #f2e4d0; font-family: "Liberation Sans", sans-serif; }
.tb-chev { width: 17px; background: #e4e4e4; display: flex; flex-direction: column; align-items: center; justify-content: space-around; }
.tray { display: flex; align-items: center; justify-content: center; flex: none; }
.two { text-align: center; line-height: 18px; white-space: nowrap; }

.dialog {
  position: absolute;
  left: 124px;
  top: 95px;
  width: 456px;
  height: 585px;
  box-sizing: border-box;
  border: 1px solid #2f8fe4;
  background: #f0f0f0;
  box-shadow: 0 0 12px rgba(0, 0, 0, 0.45);
  display: flex;
  flex-direction: column;
}
.dlg-title {
  height: 26px;
  flex: none;
  display: flex;
  align-items: center;
  justify-content: space-between;
  background: #fff;
  padding: 0 10px 0 2px;
  color: #333;
}
.tiles {
  display: grid;
  grid-template-columns: 221px 221px;
  gap: 5px 5px;
  margin: 3px 0 0 3px;
  flex: none;
}
.tile { width: 221px; height: 138px; background: #000; overflow: hidden; outline: 1px solid #c8c8c8; }
.tile svg { display: block; }
.tile.sel { box-shadow: inset 0 0 0 3px #f00; }
.num { fill: #00e000; font: 11px "Liberation Sans", sans-serif; text-anchor: middle; }
.num.lg { font-size: 12px; }
.unit { fill: #fff; font: 10.5px "Liberation Mono", monospace; text-anchor: middle; }
.deg { fill: #fff; font-size: 12px; text-anchor: middle; }
.node-name {
  fill: #fff;
  font-family: "Liberation Serif", "Noto Sans CJK SC", serif;
  font-size: 17px;
  font-weight: 700;
  text-anchor: middle;
}
.preview { margin: 5px 0 0 0; height: 225px; flex: none; }
.preview svg { display: block; background: #000; }
.big-input { fill: #000; font: 22px "Liberation Serif", serif; }
.big-unit { fill: #fff; font: 17px "Liberation Serif", serif; }
.big-unit.mm { font-size: 15px; }
.big-num { fill: #00e000; font: 20px "Liberation Serif", serif; }
.big-name {
  fill: #fff;
  font-family: "Liberation Serif", "Noto Sans CJK SC", serif;
  font-size: 28px;
  text-anchor: middle;
}
.dlg-foot { flex: 1; display: flex; justify-content: flex-end; gap: 13px; padding: 12px 14px 0 0; box-sizing: border-box; }
.dlg-btn {
  width: 72px;
  height: 23px;
  padding: 0;
  background: #e1e1e1;
  border: 1px solid #adadad;
  font: 12px "Noto Sans CJK SC", sans-serif;
  color: #111;
}

.mark { position: absolute; left: 1040px; top: 100px; pointer-events: none; }

.badge {
  position: absolute;
  left: 719px;
  top: -24px;
  width: 42px;
  height: 42px;
  border-radius: 50%;
  background: #41a85a;
  box-shadow: 0 2px 3px rgba(0, 0, 0, 0.45);
  display: flex;
  align-items: flex-end;
  justify-content: center;
  color: #fff;
  font: 700 12px "Liberation Sans", sans-serif;
}
.badge span { margin-bottom: 6px; }
</style>
